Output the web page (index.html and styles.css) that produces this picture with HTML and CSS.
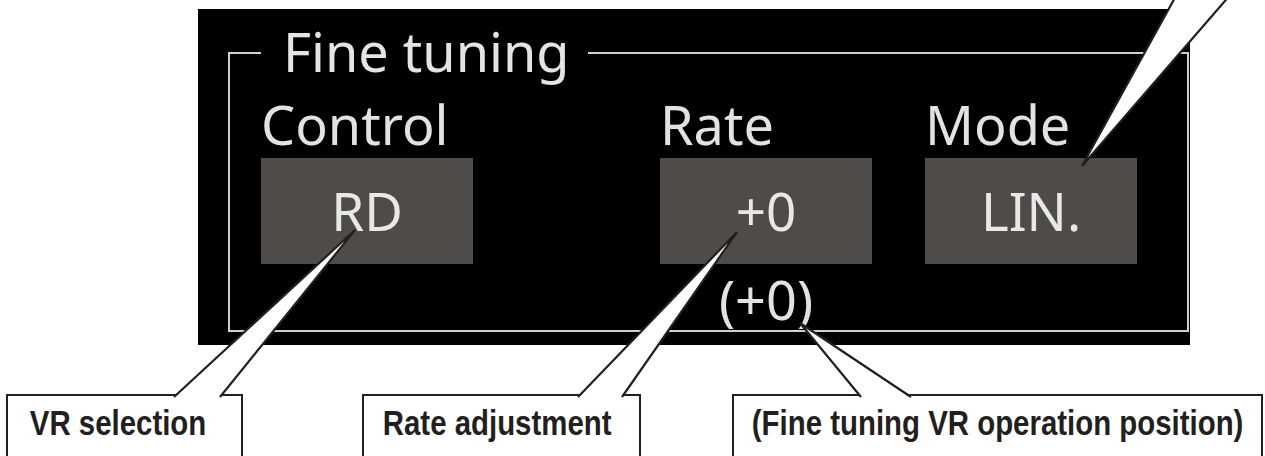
FILE: index.html
```html
<!DOCTYPE html>
<html lang="en">
<head>
<meta charset="utf-8">
<title>Fine tuning</title>
<link rel="stylesheet" href="styles.css">
</head>
<body>
<div class="page">
  <div class="panel">
    <fieldset class="group">
      <legend class="group-title">Fine tuning</legend>
      <div class="cols">
        <div class="col col-control">
          <div class="label">Control</div>
          <div class="value">RD</div>
        </div>
        <div class="col col-rate">
          <div class="label">Rate</div>
          <div class="value">+0</div>
          <div class="sub">(+0)</div>
        </div>
        <div class="col col-mode">
          <div class="label">Mode</div>
          <div class="value">LIN.</div>
        </div>
      </div>
    </fieldset>
  </div>
  <div class="callouts">
    <div class="callout c1"><span class="callout-text">VR selection</span></div>
    <div class="callout c2"><span class="callout-text">Rate adjustment</span></div>
    <div class="callout c3"><span class="callout-text">(Fine tuning VR operation position)</span></div>
  </div>
  <svg class="pointers" width="1265" height="456" viewBox="0 0 1265 456" aria-hidden="true">
    <g class="ptr">
      <polygon points="174,398 355,230 220,398"/>
      <polyline points="174,397 355,230 220,397"/>
    </g>
    <g class="ptr">
      <polygon points="578,398 737,232 622,398"/>
      <polyline points="578,397 737,232 622,397"/>
    </g>
    <g class="ptr">
      <polygon points="861,398 800,323 911,398"/>
      <polyline points="861,397 800,323 911,397"/>
    </g>
    <g class="ptr">
      <polygon points="1177,-6 1082,166 1231,-6"/>
      <polyline points="1177,-6 1082,166 1231,-6"/>
    </g>
  </svg>
</div>
</body>
</html>
```

FILE: styles.css
```css
html, body {
  margin: 0;
  padding: 0;
  background: #ffffff;
  overflow: hidden;
}

.page {
  position: relative;
  width: 1265px;
  height: 456px;
  padding-top: 9px;
  box-sizing: border-box;
  overflow: hidden;
  font-family: "Noto Sans", "Open Sans", sans-serif;
}

.panel {
  width: 992px;
  margin-left: 198px;
  box-sizing: border-box;
  padding: 12px 1px 13px 30px;
  background: #000000;
}

.group {
  margin: 0;
  min-width: 0;
  border: 2px solid #d0d0d0;
  padding: 9px 0 1px 31px;
}

.group-title {
  margin: 0;
  padding: 0 18px 4px 22px;
  font-size: 54px;
  line-height: 60px;
  color: #e4e4e4;
}

.cols {
  display: flex;
  align-items: flex-start;
}

.col {
  width: 212px;
  flex: none;
}

.col-rate {
  margin-left: 187px;
}

.col-mode {
  margin-left: 53px;
}

.label {
  font-size: 54px;
  line-height: 60px;
  color: #e2e2e2;
  margin-bottom: 4px;
  white-space: nowrap;
}

.value {
  height: 106px;
  background: #4e4b48;
  color: #e8e8e8;
  font-size: 53px;
  line-height: 106px;
  text-align: center;
}

.sub {
  margin-top: 5px;
  font-size: 54px;
  line-height: 60px;
  text-align: center;
  color: #e2e2e2;
}

.callouts {
  display: flex;
  margin-top: 49px;
}

.callout {
  flex: none;
  display: flex;
  justify-content: center;
  align-items: flex-start;
  height: 80px;
  box-sizing: border-box;
  border: 2px solid #231f20;
  border-bottom: none;
  padding-top: 9px;
  font-family: "Liberation Sans", Arial, sans-serif;
  font-weight: bold;
  font-size: 35px;
  line-height: 35px;
  color: #231f20;
  white-space: nowrap;
}

.callout-text {
  display: inline-block;
  flex: none;
  transform: scaleX(0.84);
  transform-origin: center;
}

.c1 {
  margin-left: 6px;
  width: 237px;
  padding-right: 13px;
}

.c2 {
  margin-left: 119px;
  width: 279px;
  padding-right: 8px;
}

.c3 {
  margin-left: 91px;
  width: 531px;
}

.pointers {
  position: absolute;
  left: 0;
  top: 0;
  overflow: visible;
  pointer-events: none;
}

.ptr polygon {
  fill: #ffffff;
  stroke: none;
}

.ptr polyline {
  fill: none;
  stroke: #231f20;
  stroke-width: 2.2;
  stroke-linejoin: miter;
}
```
